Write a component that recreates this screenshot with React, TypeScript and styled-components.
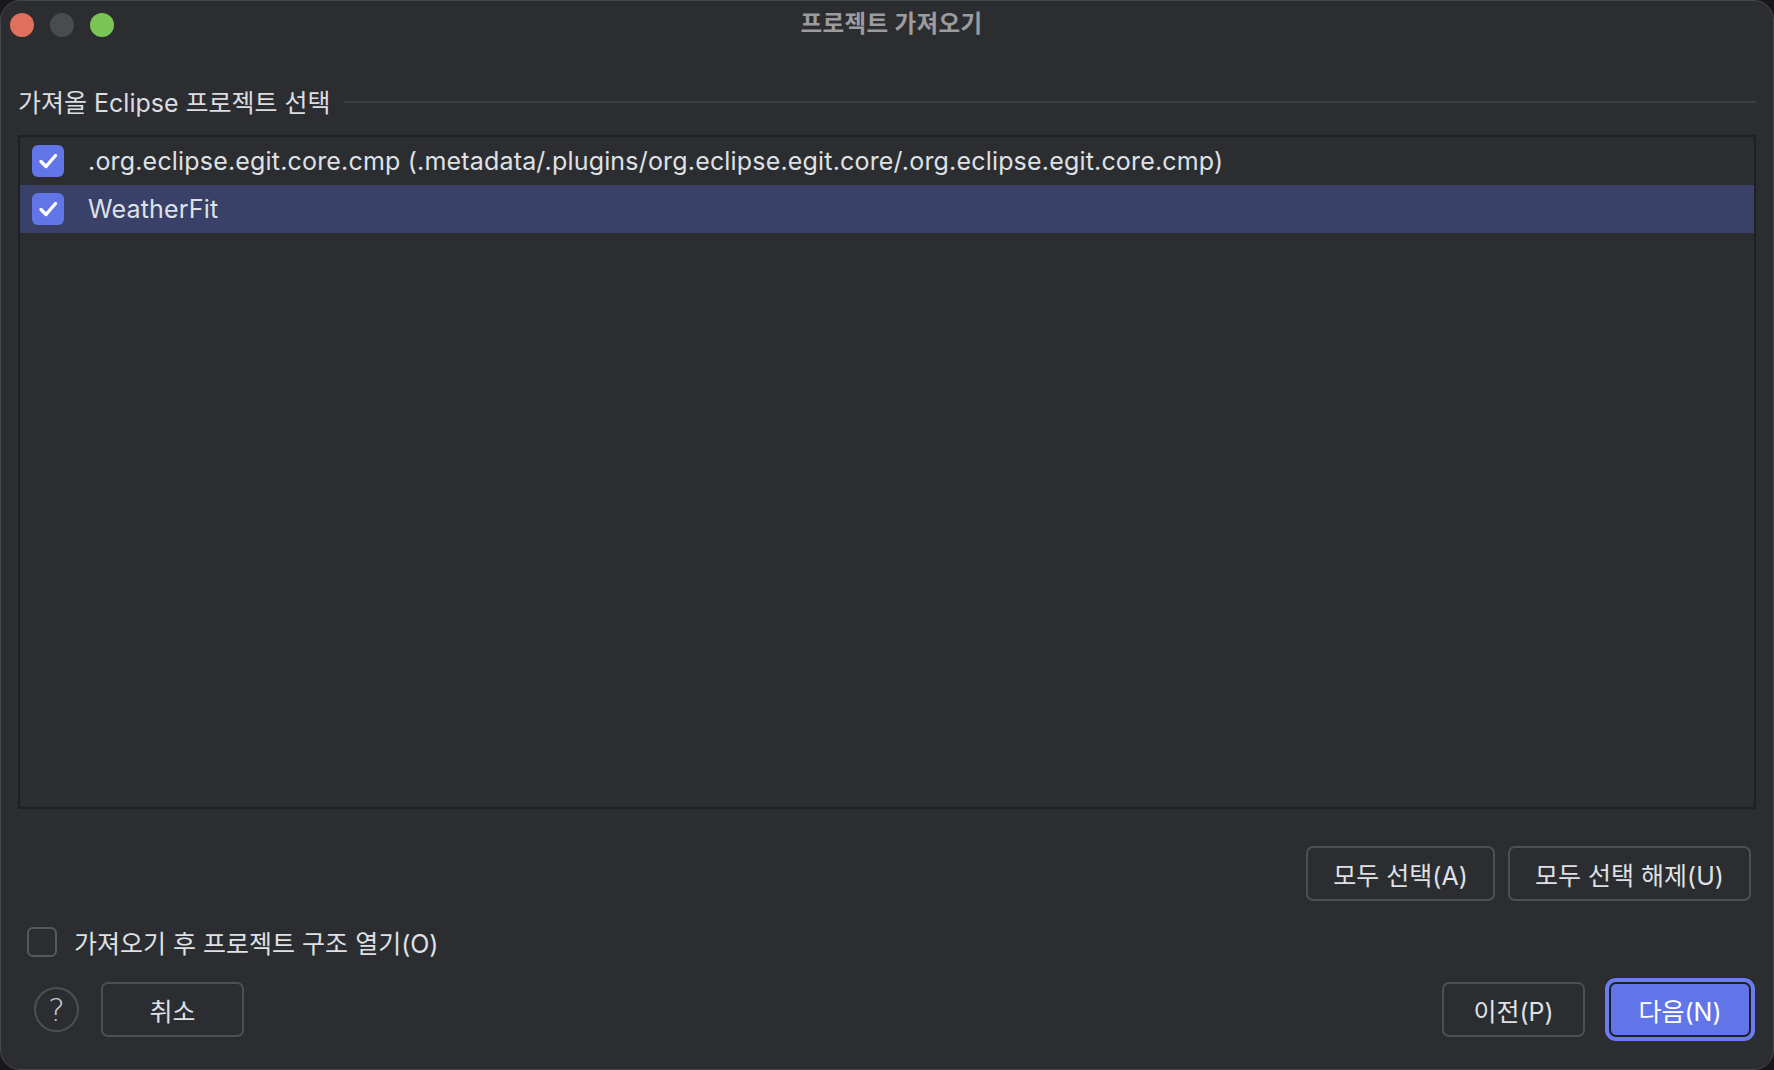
import React from "react"
import styled, { createGlobalStyle } from "styled-components"

const GlobalStyle = createGlobalStyle`
  html, body {
    margin: 0;
    padding: 0;
    background: #18181a;
  }
  body {
    font-family: Inter, "Noto Sans CJK KR", "Noto Sans", sans-serif;
    color: #dfe1e5;
  }
  * {
    box-sizing: border-box;
  }
`

const projects = [
  {
    name: ".org.eclipse.egit.core.cmp (.metadata/.plugins/org.eclipse.egit.core/.org.eclipse.egit.core.cmp)",
    checked: true,
    selected: false,
  },
  { name: "WeatherFit", checked: true, selected: true },
]

export default function App() {
  return (
    <>
      <GlobalStyle />
      <Window>
        <TitleBar>
          <Lights>
            <Light color="#e0705c" />
            <Light color="#4a4b4e" />
            <Light color="#7bc554" />
          </Lights>
          <Title>프로젝트 가져오기</Title>
          <span />
        </TitleBar>

        <Content>
          <SectionHeader>
            <SectionLabel>가져올 Eclipse 프로젝트 선택</SectionLabel>
            <Rule />
          </SectionHeader>

          <ProjectList>
            {projects.map((p) => (
              <Row key={p.name} selected={p.selected}>
                <CheckBox checked={p.checked}>
                  {p.checked && <CheckMark />}
                </CheckBox>
                <RowText>{p.name}</RowText>
              </Row>
            ))}
          </ProjectList>

          <SelectRow>
            <Button width={189}>모두 선택(A)</Button>
            <Button width={243}>모두 선택 해제(U)</Button>
          </SelectRow>

          <OptionRow>
            <CheckBox checked={false} />
            <OptionText>가져오기 후 프로젝트 구조 열기(O)</OptionText>
          </OptionRow>

          <Footer>
            <FooterGroup>
              <HelpButton>?</HelpButton>
              <Button width={143}>취소</Button>
            </FooterGroup>
            <FooterGroup gap={24}>
              <Button width={143}>이전(P)</Button>
              <Button width={142} primary>
                다음(N)
              </Button>
            </FooterGroup>
          </Footer>
        </Content>
      </Window>
    </>
  )
}

function CheckMark() {
  return (
    <svg width="32" height="32" viewBox="0 0 32 32">
      <path
        d="M9 16.5 L14 21.5 L23.5 10.5"
        fill="none"
        stroke="#ffffff"
        strokeWidth="3.4"
        strokeLinecap="round"
        strokeLinejoin="round"
      />
    </svg>
  )
}

const Window = styled.div`
  width: 1774px;
  height: 1070px;
  background: #2b2d31;
  border-radius: 20px;
  border: 1px solid #47484c;
  display: flex;
  flex-direction: column;
  overflow: hidden;
`

const TitleBar = styled.div`
  height: 47px;
  display: grid;
  grid-template-columns: 1fr auto 1fr;
  align-items: center;
  padding-left: 9px;
`

const Lights = styled.div`
  display: flex;
  gap: 16px;
`

const Light = styled.div<{ color: string }>`
  width: 24px;
  height: 24px;
  border-radius: 50%;
  background: ${(p) => p.color};
`

const Title = styled.div`
  font-size: 23.5px;
  font-weight: 700;
  color: #9c9c9e;
  margin-top: -6px;
  letter-spacing: 0.4px;
`

const Content = styled.div`
  display: flex;
  flex-direction: column;
  padding: 0 17px 0 17px;
`

const SectionHeader = styled.div`
  margin-top: 40px;
  height: 25px;
  display: flex;
  align-items: center;
  gap: 13px;
`

const SectionLabel = styled.div`
  font-size: 25px;
  color: #dcdde0;
  white-space: nowrap;
`

const Rule = styled.div`
  flex: 1;
  height: 2px;
  background: #3c3e42;
  margin-top: 2px;
`

const ProjectList = styled.div`
  margin-top: 22px;
  height: 674px;
  border: 2px solid #1f2023;
  background: #2b2d31;
  display: flex;
  flex-direction: column;
`

const Row = styled.div<{ selected: boolean }>`
  height: 48px;
  display: flex;
  align-items: center;
  padding-left: 12px;
  gap: 24px;
  background: ${(p) => (p.selected ? "#3a4169" : "transparent")};
`

const CheckBox = styled.div<{ checked: boolean }>`
  width: 32px;
  height: 32px;
  border-radius: 6px;
  flex-shrink: 0;
  display: flex;
  align-items: center;
  justify-content: center;
  background: ${(p) => (p.checked ? "#6275e8" : "transparent")};
  border: ${(p) => (p.checked ? "none" : "2px solid #56585c")};
`

const RowText = styled.div`
  font-size: 25px;
  letter-spacing: 0.18px;
  color: #dfe1e5;
  white-space: nowrap;
`

const SelectRow = styled.div`
  margin-top: 37px;
  display: flex;
  justify-content: flex-end;
  gap: 13px;
  padding-right: 5px;
`

const Button = styled.button<{ width?: number; primary?: boolean }>`
  height: 55px;
  ${(p) => (p.width ? `width: ${p.width}px;` : "padding: 0 22px;")}
  border-radius: 7px;
  font-family: inherit;
  font-size: 25px;
  color: ${(p) => (p.primary ? "#ffffff" : "#dfe1e5")};
  background: ${(p) => (p.primary ? "#6275e8" : "transparent")};
  border: 2px solid ${(p) => (p.primary ? "#1f2023" : "#4d4f53")};
  box-shadow: ${(p) => (p.primary ? "0 0 0 4px #6b7cf0" : "none")};
  display: flex;
  align-items: center;
  justify-content: center;
  cursor: pointer;
`

const OptionRow = styled.div`
  margin-top: 25px;
  height: 31px;
  display: flex;
  align-items: center;
  gap: 17px;
  padding-left: 9px;

  & > ${CheckBox} {
    width: 30px;
    height: 30px;
  }
`

const OptionText = styled.div`
  font-size: 25px;
  color: #dfe1e5;
`

const Footer = styled.div`
  margin-top: 25px;
  display: flex;
  justify-content: space-between;
  align-items: center;
  padding-left: 16px;
  padding-right: 5px;
`

const FooterGroup = styled.div<{ gap?: number }>`
  display: flex;
  align-items: center;
  gap: ${(p) => p.gap ?? 22}px;
`

const HelpButton = styled.button`
  width: 45px;
  height: 45px;
  border-radius: 50%;
  border: 2px solid #4d4f53;
  background: transparent;
  color: #c9cacd;
  font-family: "DejaVu Sans", sans-serif;
  font-size: 32px;
  font-weight: 200;
  line-height: 1;
  display: flex;
  align-items: center;
  justify-content: center;
  padding: 0;
`
